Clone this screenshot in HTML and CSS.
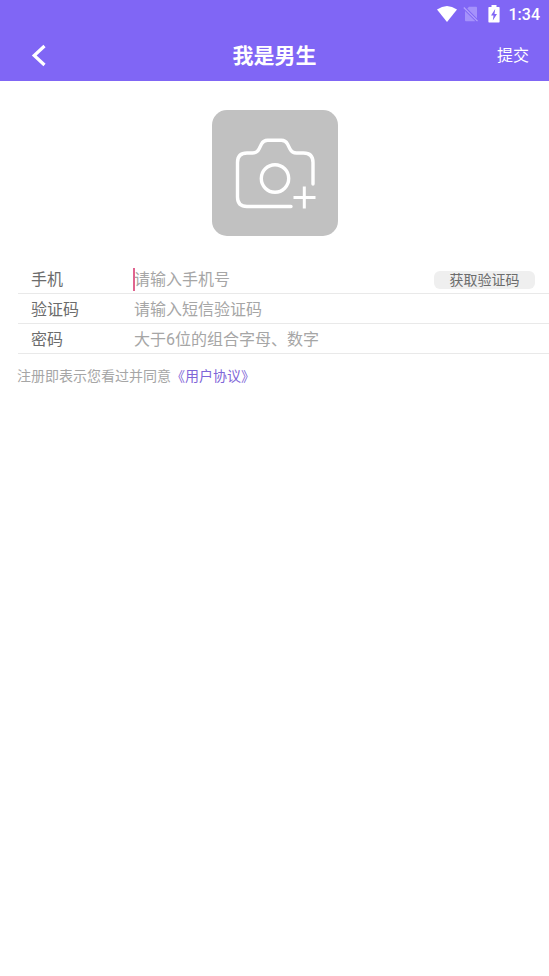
FILE: index.html
```html
<!DOCTYPE html>
<html lang="zh-CN">
<head>
<meta charset="utf-8">
<meta name="viewport" content="width=device-width, initial-scale=1">
<title>我是男生</title>
<link rel="stylesheet" href="styles.css">
</head>
<body>
<header class="top">
  <div class="status">
    <svg width="20" height="16" viewBox="0 0 20 16" aria-hidden="true"><path d="M0 3.600Q10-3.400 20 3.600L10 16z" fill="#fff"/></svg>
    <svg class="sim" width="16" height="16" viewBox="0 0 16 16" aria-hidden="true"><path d="M6 .8h7q1 0 1 1v10.700L4.300 2.500zM2 5L12.400 15.200H3q-1 0-1-1z" fill="#a592fb"/><path d="M.8 1.500l13.700 13.700" stroke="#b3a2fc" stroke-width="1.200"/></svg>
    <svg class="battery" width="12" height="18" viewBox="0 0 12 18" aria-hidden="true"><path d="M3.500 0h5v2H11q.6 0 .6.7v14q0 .7-.6.7H1q-.6 0-.6-.7v-14Q.4 2 1 2h2.500z" fill="#fff"/><path d="M7.200 4L3 10.500h2.500L4.800 15.500 9 9H6.500z" fill="#8066f5"/></svg>
    <time class="clock">1:34</time>
  </div>
  <div class="bar">
    <button class="back" type="button" aria-label="返回"><svg width="16" height="24" viewBox="0 0 16 24" aria-hidden="true"><path d="M13.500 2L3.200 11.500l10.300 9.500" fill="none" stroke="#fff" stroke-width="3.200"/></svg></button>
    <h1 class="title">我是男生</h1>
    <button class="submit" type="submit" form="signup">提交</button>
  </div>
</header>
<main>
  <button class="photo" type="button" aria-label="上传头像">
    <svg width="126" height="126" viewBox="0 0 126 126" fill="none" stroke="#fff" stroke-width="3.400" stroke-linecap="round" aria-hidden="true">
      <path d="M79 96.500H35q-9.500 0-9.500-9.500V52.500Q25.500 43 35 43h5.500q4.500 0 6.500-4l2.500-5q2-3.700 6-3.700h14q4 0 6 3.700l2.500 5q2 4 6.500 4h7q9.500 0 9.500 9.500V74"/>
      <circle cx="63" cy="68.500" r="13.700"/>
      <path d="M92.300 78v19M83 87.500h19" stroke-linecap="square" stroke-width="3"/>
    </svg>
  </button>
  <form class="form" id="signup">
    <div class="row">
      <label for="phone">手机</label>
      <span class="field"><i class="caret"></i><input id="phone" type="tel" placeholder="请输入手机号"></span>
      <button class="code" type="button">获取验证码</button>
    </div>
    <div class="row">
      <label for="sms">验证码</label>
      <span class="field"><input id="sms" type="text" placeholder="请输入短信验证码"></span>
    </div>
    <div class="row">
      <label for="password">密码</label>
      <span class="field"><input id="password" type="password" placeholder="大于6位的组合字母、数字"></span>
    </div>
  </form>
  <p class="terms">注册即表示您看过并同意<a href="#terms">《用户协议》</a></p>
</main>
</body>
</html>
```
FILE: styles.css
```css
* {
  box-sizing: border-box;
}

body {
  margin: 0;
  background: #fff;
  color: #6c6c6c;
  font: 16px/24px Roboto, "Noto Sans CJK SC", sans-serif;
}

button,
input {
  margin: 0;
  padding: 0;
  border: 0;
  background: none;
  color: inherit;
  font: inherit;
}

svg {
  display: block;
}

.top {
  background: #8066f5;
  color: #fff;
}

.status {
  display: flex;
  align-items: center;
  justify-content: flex-end;
  height: 28px;
  padding-right: 9px;
}

.sim {
  margin-left: 6px;
}

.battery {
  margin-left: 9px;
}

.clock {
  margin-left: 9px;
  padding-top: 2px;
  font-weight: 500;
}

.bar {
  display: grid;
  grid-template-columns: 1fr auto 1fr;
  align-items: center;
  height: 53px;
  padding: 2px 20px 0 31px;
}

.back {
  justify-self: start;
}

.title {
  margin: 0;
  padding-right: 11px;
  font-size: 21px;
  font-weight: 700;
}

.submit {
  justify-self: end;
}

.photo {
  display: block;
  margin: 29px auto 0;
  border-radius: 15px;
  background: #c1c1c1;
}

.form {
  margin: 28px 0 0 18px;
}

.row {
  display: flex;
  align-items: center;
  height: 30px;
  padding: 2px 14px 0 13px;
  border-bottom: 1px solid #e9e9e9;
}

.row label {
  flex: 0 0 103px;
}

.field {
  position: relative;
  flex: 1;
  min-width: 0;
}

.field input {
  display: block;
  width: 100%;
  outline: 0;
}

.field input::placeholder {
  color: #a6a6a6;
  opacity: 1;
}

.caret {
  position: absolute;
  top: 0;
  left: -1px;
  width: 2px;
  height: 23px;
  background: #e0648f;
}

.code {
  width: 101px;
  height: 18px;
  border-radius: 6px;
  background: #efefef;
  font-size: 14px;
  line-height: 18px;
}

.terms {
  margin: 10px 17px;
  color: #a6a6a6;
  font-size: 14px;
}

.terms a {
  color: #7f66d8;
  text-decoration: none;
}
```
